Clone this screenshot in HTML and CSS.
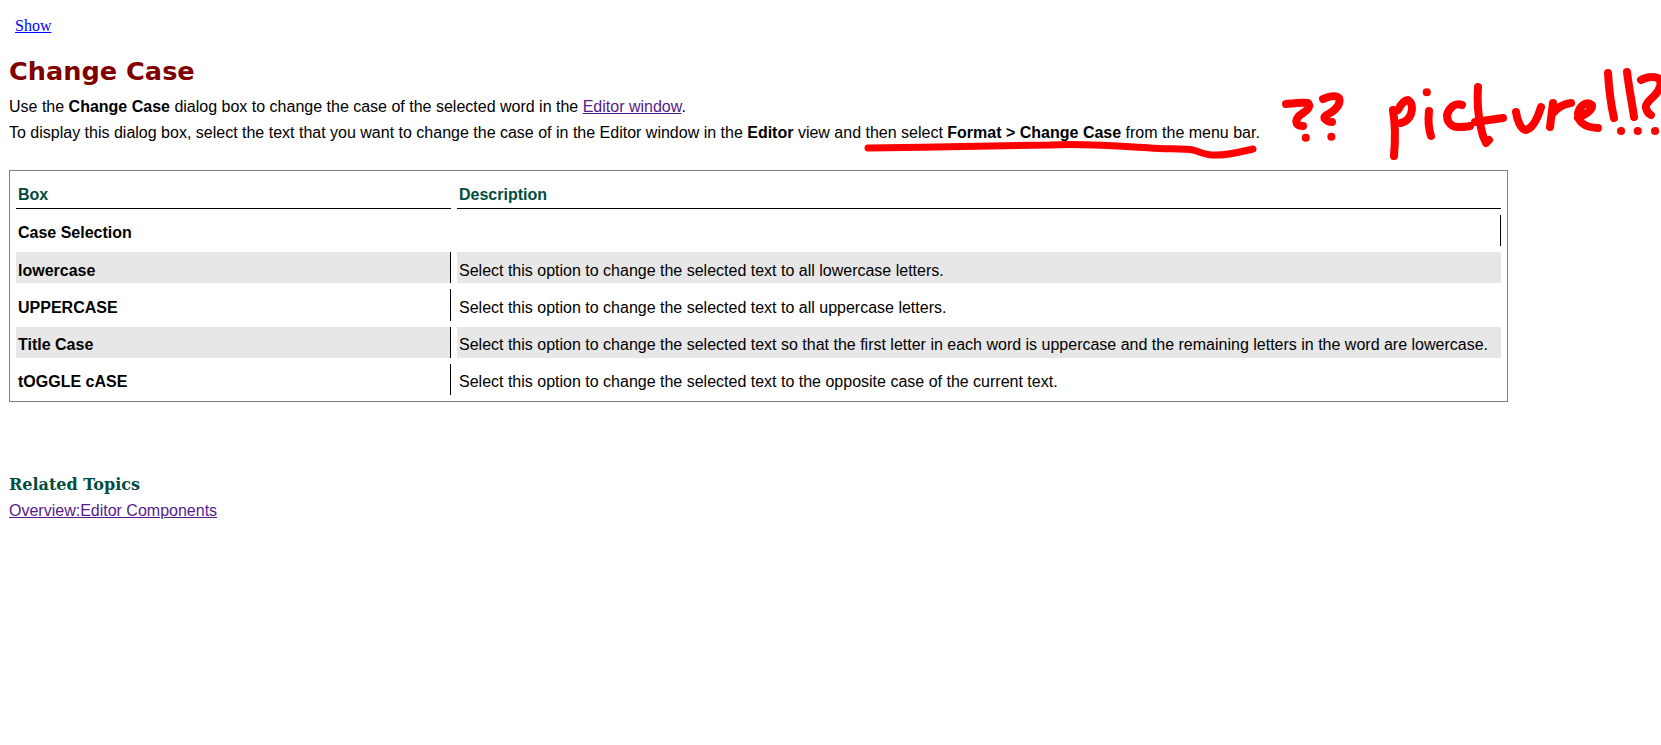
FILE: index.html
```html
<!DOCTYPE html>
<html lang="en">
<head>
<meta charset="utf-8">
<title>Change Case</title>
<link rel="stylesheet" href="styles.css">
</head>
<body>
<p class="show"><a href="#" class="show-link">Show</a></p>
<h1 class="title">Change Case</h1>
<p class="para">Use the <b>Change Case</b> dialog box to change the case of the selected word in the <a href="#" class="visited">Editor window</a>.</p>
<p class="para">To display this dialog box, select the text that you want to change the case of in the Editor window in the <b>Editor</b> view and then select <b>Format &gt; Change Case</b> from the menu bar.</p>
<table class="box-table">
<thead>
<tr><th class="col-box">Box</th><th class="col-desc">Description</th></tr>
</thead>
<tbody>
<tr><td colspan="2" class="group">Case Selection</td></tr>
<tr class="shade low"><td class="name">lowercase</td><td class="desc">Select this option to change the selected text to all lowercase letters.</td></tr>
<tr class="low tall"><td class="name">UPPERCASE</td><td class="desc">Select this option to change the selected text to all uppercase letters.</td></tr>
<tr class="shade"><td class="name">Title Case</td><td class="desc">Select this option to change the selected text so that the first letter in each word is uppercase and the remaining letters in the word are lowercase.</td></tr>
<tr><td class="name">tOGGLE cASE</td><td class="desc">Select this option to change the selected text to the opposite case of the current text.</td></tr>
</tbody>
</table>
<h4 class="related">Related Topics</h4>
<p class="para link-line"><a href="#" class="visited">Overview:Editor Components</a></p>
<svg class="scribble" viewBox="0 0 1661 745" aria-hidden="true">
<g class="ink">
<path class="thin" d="M868 148C930 147 1000 146 1050 145C1085 143 1110 146 1150 148C1170 149 1185 149 1193 150C1200 152 1205 155 1212 155C1225 156 1240 152 1253 149"/>
<path d="M1286 104C1295 103 1303 102 1308 103C1311 106 1308 110 1303 113C1298 116 1295 120 1297 124C1299 126 1301 126 1303 126"/>
<path d="M1323 99C1330 96 1336 95 1339 98C1341 103 1337 109 1330 113C1326 115 1323 117 1325 119C1327 121 1330 122 1332 122"/>
<path d="M1305.700 137.700h.1"/>
<path d="M1331.300 136.700h.1"/>
<path d="M1393 110C1395 122 1396 133 1394 156"/>
<path d="M1398 110C1401 104 1405 100 1408 100C1412 102 1413 108 1411 114C1409 119 1405 122 1401 123"/>
<path d="M1426.700 92.300h.1"/>
<path d="M1429 111C1428 120 1429 130 1431 136"/>
<path d="M1462 105C1455 102 1449 108 1447 115C1447 123 1452 127 1458 127C1462 127 1466 127 1470 126"/>
<path d="M1478 87C1477 100 1478 115 1481 128C1482 134 1484 139 1486 143L1489 140"/>
<path d="M1475 122L1503 118"/>
<path d="M1516 112C1517 120 1521 130 1526 130C1533 128 1538 117 1541 107"/>
<path d="M1553 103L1550 127"/>
<path d="M1553 113C1558 107 1563 104 1571 103"/>
<path d="M1578 118C1586 114 1593 110 1592 105C1587 101 1580 105 1578 113C1578 122 1583 127 1598 128"/>
<path d="M1608 73C1609 90 1611 105 1614 118"/>
<path d="M1627 72C1629 88 1632 103 1634 117"/>
<path d="M1641 80C1646 77 1652 76 1658 78C1663 82 1660 90 1654 96C1650 100 1645 104 1646 108C1647 112 1649 114 1651 115"/>
<path d="M1621 131h.1M1637.700 131h.1M1655 131h.1"/>
</g>
</svg>
</body>
</html>
```
FILE: styles.css
```css
html, body {
  margin: 0;
  padding: 0;
  background: #fff;
}
body {
  position: relative;
  height: 745px;
  overflow: hidden;
  padding: 0 8px 0 9px;
  font-family: "Liberation Sans", Arial, sans-serif;
  font-size: 16px;
  color: #000;
}
.show {
  margin: 0;
  padding: 17px 0 0 6px;
  font-family: "Liberation Serif", serif;
  font-size: 16px;
  line-height: 18px;
}
.show-link { color: #0000ff; }
.title {
  margin: 20px 0 0;
  font-family: "DejaVu Sans", Verdana, sans-serif;
  font-size: 25.6px;
  line-height: 32px;
  font-weight: 700;
  color: #800000;
}
.para {
  margin: 0;
  line-height: 26px;
}
.title + .para { margin-top: 7px; }
.visited { color: #551a8b; }
.box-table {
  margin-top: 24px;
  width: 1499px;
  border: 1px solid #808080;
  border-spacing: 6px;
  border-collapse: separate;
  font-size: 16px;
}
.box-table th {
  text-align: left;
  color: #004d40;
  font-weight: 700;
  border-bottom: 1px solid #000;
  padding: 9px 2px 4px;
  line-height: 18px;
}
.col-box { width: 431px; }
.box-table td {
  padding: 9px 2px 0;
  height: 22px;
  line-height: 18px;
  vertical-align: top;
}
.box-table .low td {
  padding-top: 10px;
  height: 21px;
}
.box-table .tall td { height: 22px; }
.group {
  font-weight: 700;
  border-right: 1px solid #000;
}
.name {
  font-weight: 700;
  border-right: 1px solid #000;
}
.shade td { background: #e7e7e7; }
.related {
  margin: 73px 0 0;
  font-family: "DejaVu Serif", Verdana, serif;
  font-size: 16px;
  line-height: 20px;
  font-weight: 700;
  color: #004d40;
}
.link-line {
  margin-top: 4px;
  line-height: 24px;
}
.scribble {
  position: absolute;
  left: 0;
  top: 0;
  width: 1661px;
  height: 745px;
  pointer-events: none;
}
.ink {
  fill: none;
  stroke: #ff0000;
  stroke-width: 8;
  stroke-linecap: round;
  stroke-linejoin: round;
}
.ink .thin { stroke-width: 7; }
```
